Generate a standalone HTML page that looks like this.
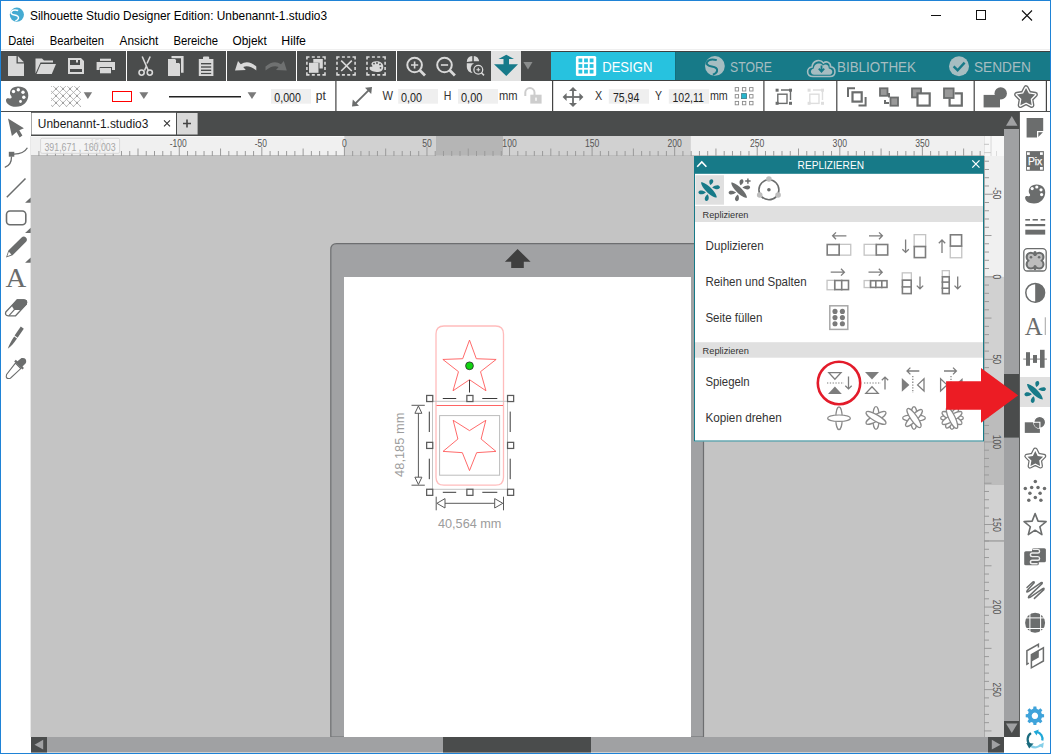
<!DOCTYPE html>
<html><head><meta charset="utf-8">
<style>
html,body{margin:0;padding:0;background:#fff;overflow:hidden;}
svg{display:block;}
text{font-family:"Liberation Sans",sans-serif;}
</style></head>
<body>
<svg width="1051" height="754" viewBox="0 0 1051 754" shape-rendering="geometricPrecision">
<!-- base -->
<rect x="0" y="0" width="1051" height="754" fill="#ffffff"/>

<!-- TITLE BAR -->
<g id="title">
  <circle cx="16.85" cy="14.65" r="7.1" fill="#45abd2"/>
  <path d="M18.2,10.5 C15.5,9.7 12.4,10 11.2,11.8 C10.3,13.3 11.8,14.6 14.6,15.1 C17.6,15.6 18.8,16.6 18.4,18.3 C18.1,19.6 16.9,20.4 15.4,20.9" fill="none" stroke="#fff" stroke-width="1.5"/>
  <text x="30" y="20" font-size="12.4" fill="#000" textLength="297" lengthAdjust="spacingAndGlyphs">Silhouette Studio Designer Edition: Unbenannt-1.studio3</text>
  <rect x="931" y="15" width="10" height="1" fill="#111"/>
  <rect x="976.5" y="10.5" width="9" height="9" fill="none" stroke="#111" stroke-width="1"/>
  <path d="M1022,10.5 L1032,20.5 M1032,10.5 L1022,20.5" stroke="#111" stroke-width="1.1"/>
</g>

<!-- MENU BAR -->
<g id="menu" font-size="12" fill="#000">
  <text x="8.2" y="44.7" textLength="26" lengthAdjust="spacingAndGlyphs">Datei</text>
  <text x="49.7" y="44.7" textLength="54.3" lengthAdjust="spacingAndGlyphs">Bearbeiten</text>
  <text x="119.5" y="44.7" textLength="38.9" lengthAdjust="spacingAndGlyphs">Ansicht</text>
  <text x="173.4" y="44.7" textLength="44.6" lengthAdjust="spacingAndGlyphs">Bereiche</text>
  <text x="232.5" y="44.7" textLength="34.2" lengthAdjust="spacingAndGlyphs">Objekt</text>
  <text x="281.3" y="44.7" textLength="24.7" lengthAdjust="spacingAndGlyphs">Hilfe</text>
  <rect x="0" y="49" width="1051" height="1" fill="#efefef"/>
</g>

<!-- TOOLBAR ROW 1 -->
<g id="tb1">
  <rect x="0" y="51" width="1051" height="30" fill="#4a4c4c"/>
  <rect x="126" y="51" width="1" height="30" fill="#ffffff"/>
  <rect x="226" y="51" width="1" height="30" fill="#ffffff"/>
  <rect x="296" y="51" width="1" height="30" fill="#ffffff"/>
  <rect x="396" y="51" width="1" height="30" fill="#ffffff"/>
  <rect x="491" y="51" width="30" height="30" fill="#e2e2e2"/>
  <rect x="551" y="52" width="124" height="28" fill="#27c2df"/>
  <rect x="675" y="52" width="376" height="28" fill="#177a88"/>
  <rect x="675" y="52" width="1" height="28" fill="#146f7c"/>
  <rect x="551" y="51" width="500" height="1" fill="#3e4040"/>
  <rect x="551" y="80" width="500" height="1" fill="#3e4040"/>
  <g fill="#d9d9d9">
    <!-- new doc -->
    <path d="M8,56 H16.5 V63.5 H24 V76 H8 Z"/>
    <path d="M17.8,56 L24,62.2 H17.8 Z"/>
    <!-- folder -->
    <path d="M35.5,73.5 V58.5 H42 L44,60.5 H53 V62.5 H40.5 Z"/>
    <path d="M36.5,74 L40.8,64 H56 L51.8,74 Z"/>
    <!-- save -->
    <path d="M68,58 H81 L84,61 V74 H68 Z M70,60 V65 H80 V60 H78 V62.5 H76 V60 Z M70,69 V72 H82 V69 Z" fill-rule="evenodd"/>
    <!-- print -->
    <rect x="100" y="58.7" width="11" height="2.2"/>
    <path d="M96.6,62 H115 V70 H112 V67 H99.6 V70 H96.6 Z"/>
    <rect x="100" y="68" width="11" height="5.3"/>
  </g>
  <!-- scissors -->
  <g stroke="#d9d9d9" fill="none" stroke-width="1.6">
    <path d="M142.2,56.5 L148.3,70.5 M150.2,56.5 L147,63.5 M144.5,70.5 L146.2,66.5"/>
    <circle cx="141.6" cy="72.6" r="2.6"/>
    <circle cx="149.8" cy="72.6" r="2.6"/>
  </g>
  <g fill="#d9d9d9">
    <!-- copy -->
    <path d="M171.5,56 H183.6 V72.8 H181 V58.3 H171.5 Z"/>
    <path d="M168,59 H175 L180,64 V76 H168 Z"/>
    <path d="M176,59.5 L179.5,63 H176 Z" fill="#4a4c4c"/>
    <!-- paste -->
    <path d="M198.8,59 H203 V57.5 Q203,56.6 204,56.6 H208.2 Q209.2,56.6 209.2,57.5 V59 H213.4 V76 H198.8 Z"/>
    <g fill="#4a4c4c"><rect x="201" y="63" width="10.2" height="1.4"/><rect x="201" y="66.3" width="10.2" height="1.4"/><rect x="201" y="69.6" width="10.2" height="1.4"/><rect x="201" y="72.9" width="10.2" height="1.2"/></g>
    <!-- undo -->
    <path d="M235,70.5 L238,61 L240.8,64.2 Q248,59.2 256.3,66.5 L256.3,70.5 Q249,64.5 243.2,67 L245.8,70 Z"/>
    <!-- redo -->
    <path d="M286.8,70.5 L283.8,61 L281,64.2 Q273.8,59.2 265.5,66.5 L265.5,70.5 Q272.8,64.5 278.6,67 L276,70 Z" fill="#6f7171"/>
  </g>
  <!-- dashed boxes -->
  <path d="M306.9,59.6 V57.0 H309.5 M322.4,57.0 H325.0 V59.6 M325.0,72.30000000000001 V74.9 H322.4 M309.5,74.9 H306.9 V72.30000000000001 M311.80,57.0 H314.80 M311.80,74.9 H314.80 M306.9,61.83 V64.83 M325.0,61.83 V64.83 M317.10,57.0 H320.10 M317.10,74.9 H320.10 M306.9,67.07 V70.07 M325.0,67.07 V70.07 M337.0,59.6 V57.0 H339.6 M352.5,57.0 H355.1 V59.6 M355.1,72.30000000000001 V74.9 H352.5 M339.6,74.9 H337.0 V72.30000000000001 M341.90,57.0 H344.90 M341.90,74.9 H344.90 M337.0,61.83 V64.83 M355.1,61.83 V64.83 M347.20,57.0 H350.20 M347.20,74.9 H350.20 M337.0,67.07 V70.07 M355.1,67.07 V70.07 M367.0,59.6 V57.0 H369.6 M382.5,57.0 H385.1 V59.6 M385.1,72.30000000000001 V74.9 H382.5 M369.6,74.9 H367.0 V72.30000000000001 M371.90,57.0 H374.90 M371.90,74.9 H374.90 M367.0,61.83 V64.83 M385.1,61.83 V64.83 M377.20,57.0 H380.20 M377.20,74.9 H380.20 M367.0,67.07 V70.07 M385.1,67.07 V70.07" fill="none" stroke="#d9d9d9" stroke-width="1.6"/>
  <g fill="#d9d9d9">
    <path d="M313.3,59 H322.8 V68.5 H319.5 V62.8 H313.3 Z"/>
    <rect x="309" y="62.8" width="9.5" height="10"/>
    <path d="M341.2,60.6 L351.8,71 M351.8,60.6 L341.2,71" stroke="#d9d9d9" stroke-width="1.6"/>
    <!-- palette small -->
    <g transform="translate(0,1.6)"><path d="M376,59.6 C381,59.4 383.4,62 383.3,65.3 C383.2,69 380.5,70.5 376.5,70.4 C372.7,70.3 369.8,69 369.5,66.5 C369.4,65.6 370.2,64.9 371.3,65.2 C372.5,65.5 372.9,64.2 371.8,63.3 C371,62.6 371.3,59.8 376,59.6 Z"/>
    <g fill="#4a4c4c"><circle cx="374" cy="62" r="0.9"/><circle cx="377" cy="61.4" r="0.9"/><circle cx="380" cy="62.8" r="0.9"/><circle cx="380.5" cy="66.2" r="0.9"/></g></g>
  </g>
  <!-- zoom -->
  <g fill="none" stroke="#d9d9d9" stroke-width="2">
    <circle cx="414.6" cy="65" r="7.3"/>
    <path d="M419.8,70.2 L425,75.4" stroke-width="2.8"/>
    <path d="M411,65 H418.2 M414.6,61.4 V68.6" stroke-width="1.6"/>
    <circle cx="444.5" cy="65" r="7.3"/>
    <path d="M449.7,70.2 L454.9,75.4" stroke-width="2.8"/>
    <path d="M440.9,65 H448.1" stroke-width="1.6"/>
  </g>
  <g fill="#d9d9d9">
    <path d="M466.8,62 A6.2,6.2 0 0 1 472.3,56 V61.2 Z M473.8,56 A6.2,6.2 0 0 1 479.2,61.2 H473.8 Z M466.8,63.3 H474 A6,6 0 0 0 472.6,73 A6,6 0 0 1 466.8,67 Z"/>
    <circle cx="478.3" cy="69.7" r="4.4" fill="none" stroke="#d9d9d9" stroke-width="1.3"/>
    <path d="M476.4,69.7 H480.2 M478.3,67.8 V71.6" stroke="#d9d9d9" stroke-width="1.1"/>
    <path d="M481.4,72.8 L484,75.4" stroke="#d9d9d9" stroke-width="1.6"/>
  </g>
  <!-- teal arrows -->
  <path d="M506.3,54.8 L514,59 H509 V64.3 H518 L506.3,76 L494,64.3 H503.5 V59 H498.5 Z" fill="#177a8a"/>
  <path d="M523.4,62 H532.5 L528,69.6 Z" fill="#8a8c8c"/>
  <!-- DESIGN -->
  <rect x="575.9" y="55.9" width="20.3" height="20.1" rx="1.5" fill="#ffffff"/>
  <g fill="#27c2df"><rect x="578.5" y="58.5" width="3.8" height="3.8"/><rect x="584.1" y="58.5" width="3.8" height="3.8"/><rect x="589.7" y="58.5" width="3.8" height="3.8"/><rect x="578.5" y="64.1" width="3.8" height="3.8"/><rect x="584.1" y="64.1" width="3.8" height="3.8"/><rect x="589.7" y="64.1" width="3.8" height="3.8"/><rect x="578.5" y="69.7" width="3.8" height="3.8"/><rect x="584.1" y="69.7" width="3.8" height="3.8"/><rect x="589.7" y="69.7" width="3.8" height="3.8"/></g>
  <text x="602.2" y="71.8" font-size="14.4" fill="#ffffff" textLength="50.2" lengthAdjust="spacingAndGlyphs">DESIGN</text>
  <!-- STORE -->
  <circle cx="714.9" cy="65.9" r="9.9" fill="#a6bdc1"/>
  <path transform="translate(714.9,65.9) scale(1.39) translate(-16.85,-14.65)" d="M18.2,10.5 C15.5,9.7 12.4,10 11.2,11.8 C10.3,13.3 11.8,14.6 14.6,15.1 C17.6,15.6 18.8,16.6 18.4,18.3 C18.1,19.6 16.9,20.4 15.4,20.9" fill="none" stroke="#177a88" stroke-width="1.45"/>
  <text x="730" y="71.8" font-size="14.4" fill="#a6bdc1" textLength="42" lengthAdjust="spacingAndGlyphs">STORE</text>
  <!-- BIBLIOTHEK -->
  <path d="M813,76.5 C806,76.5 806,67.5 812,67 C812.5,60.5 820,58.5 823.5,63 C826.5,60.5 831,62.5 830.5,66.8 C836.5,67.5 836.5,76.5 830,76.5 Z" fill="none" stroke="#a6bdc1" stroke-width="1.6"/>
  <path d="M814.2,74.8 C810,74.8 809.8,69 813.8,68.6 C814,63.2 820.2,61.8 823,65.4 C825.6,63.2 829,65 828.8,68.4 C833.5,68.8 833.5,74.8 828.8,74.8 Z" fill="#a6bdc1"/>
  <path d="M821.5,65.5 V71 M818.8,68.6 L821.5,71.6 L824.2,68.6" fill="none" stroke="#177a88" stroke-width="1.8"/>
  <text x="837" y="71.8" font-size="14.4" fill="#a6bdc1" textLength="79" lengthAdjust="spacingAndGlyphs">BIBLIOTHEK</text>
  <!-- SENDEN -->
  <circle cx="959" cy="66.2" r="10" fill="#a6bdc1"/>
  <path d="M953.6,66.4 L957.6,70.2 L964.6,62.6" fill="none" stroke="#177a88" stroke-width="2.4"/>
  <text x="974" y="71.8" font-size="14.4" fill="#a6bdc1" textLength="57" lengthAdjust="spacingAndGlyphs">SENDEN</text>
</g>

<!-- TOOLBAR ROW 2 -->
<g id="tb2">
  <rect x="0" y="81" width="1051" height="30" fill="#ffffff"/>
  <rect x="0" y="111" width="1051" height="1.5" fill="#4a4c4c"/>
  <!-- palette -->
  <path d="M17.5,86.5 C24.5,86.2 28.5,90.2 28.3,95.5 C28.1,101.5 23.5,106.8 16,106.8 C9.5,106.8 5.8,103.2 6,100 C6.2,98.3 7.6,97.8 9.2,98.4 C11.2,99.2 12.5,97.5 11,95.8 C9,93.5 9.5,86.8 17.5,86.5 Z" fill="#6b6d6d"/>
  <g fill="#ffffff"><circle cx="13.5" cy="91.5" r="1.7"/><circle cx="18.3" cy="89.8" r="1.7"/><circle cx="23" cy="92.3" r="1.7"/><circle cx="23.8" cy="97.3" r="1.7"/><circle cx="20.5" cy="101.5" r="1.4"/></g>
  <!-- crosshatch -->
  <clipPath id="chc"><rect x="51" y="86" width="30" height="21"/></clipPath>
  <g clip-path="url(#chc)">
    <path d="M11.10,86 L32.10,107 M18.10,86 L39.10,107 M25.10,86 L46.10,107 M32.10,86 L53.10,107 M39.10,86 L60.10,107 M46.10,86 L67.10,107 M53.10,86 L74.10,107 M60.10,86 L81.10,107 M67.10,86 L88.10,107 M74.10,86 L95.10,107 M81.10,86 L102.10,107 M88.10,86 L109.10,107 M95.10,86 L116.10,107 M102.10,86 L123.10,107 M16.90,86 L-4.10,107 M23.90,86 L2.90,107 M30.90,86 L9.90,107 M37.90,86 L16.90,107 M44.90,86 L23.90,107 M51.90,86 L30.90,107 M58.90,86 L37.90,107 M65.90,86 L44.90,107 M72.90,86 L51.90,107 M79.90,86 L58.90,107 M86.90,86 L65.90,107 M93.90,86 L72.90,107 M100.90,86 L79.90,107 M107.90,86 L86.90,107" stroke="#b0b0b0" stroke-width="0.9" fill="none"/>
    <g fill="#a0a0a0"><rect x="55.00" y="87.90" width="2" height="2"/><rect x="55.00" y="94.90" width="2" height="2"/><rect x="55.00" y="101.90" width="2" height="2"/><rect x="62.00" y="87.90" width="2" height="2"/><rect x="62.00" y="94.90" width="2" height="2"/><rect x="62.00" y="101.90" width="2" height="2"/><rect x="69.00" y="87.90" width="2" height="2"/><rect x="69.00" y="94.90" width="2" height="2"/><rect x="69.00" y="101.90" width="2" height="2"/><rect x="76.00" y="87.90" width="2" height="2"/><rect x="76.00" y="94.90" width="2" height="2"/><rect x="76.00" y="101.90" width="2" height="2"/></g>
  </g>
  <g fill="#6b6d6d">
    <path d="M83.7,92.2 H92.1 L87.9,99.1 Z" fill="#7a7a7a"/>
    <path d="M139.4,92.2 H148.3 L143.85,99.1 Z" fill="#7a7a7a"/>
    <path d="M247.6,92.2 H256.4 L252,99.1 Z" fill="#7a7a7a"/>
  </g>
  <rect x="112.5" y="91.5" width="19" height="10" fill="none" stroke="#ff0000" stroke-width="1"/>
  <rect x="169" y="96" width="72" height="1.5" fill="#222"/>
  <!-- inputs -->
  <g fill="#efefef">
    <rect x="271" y="89" width="40" height="14.7"/>
    <rect x="398.2" y="89" width="39.8" height="14.7"/>
    <rect x="458" y="89" width="40" height="14.7"/>
    <rect x="608.8" y="89.2" width="40.2" height="14.5"/>
    <rect x="668.8" y="89.2" width="40.2" height="14.5"/>
  </g>
  <g font-size="12.6" fill="#222">
    <text x="274.3" y="101.5" textLength="26.6" lengthAdjust="spacingAndGlyphs">0,000</text>
    <text x="401" y="101.8" textLength="21" lengthAdjust="spacingAndGlyphs">0,00</text>
    <text x="461" y="101.8" textLength="21.3" lengthAdjust="spacingAndGlyphs">0,00</text>
    <text x="613" y="101.7" textLength="26.3" lengthAdjust="spacingAndGlyphs">75,94</text>
    <text x="672.5" y="101.7" textLength="31.4" lengthAdjust="spacingAndGlyphs">102,11</text>
  </g>
  <g font-size="12.4" fill="#333">
    <text x="315.7" y="100" textLength="10.1" lengthAdjust="spacingAndGlyphs">pt</text>
    <text x="382.5" y="99.7" textLength="10.5" lengthAdjust="spacingAndGlyphs">W</text>
    <text x="443.7" y="99.7" textLength="7.6" lengthAdjust="spacingAndGlyphs">H</text>
    <text x="499" y="100" textLength="18.6" lengthAdjust="spacingAndGlyphs">mm</text>
    <text x="595.1" y="100" textLength="7.2" lengthAdjust="spacingAndGlyphs">X</text>
    <text x="655" y="100" textLength="7" lengthAdjust="spacingAndGlyphs">Y</text>
    <text x="709.9" y="100" textLength="17.9" lengthAdjust="spacingAndGlyphs">mm</text>
  </g>
  <!-- separators -->
  <g fill="#444">
    <rect x="335.3" y="81" width="1.2" height="30"/>
    <rect x="552" y="81" width="1.2" height="30"/>
    <rect x="763.3" y="81" width="1.2" height="30"/>
    <rect x="836.2" y="81" width="1.2" height="30"/>
    <rect x="973.6" y="81" width="1.2" height="30"/>
    <rect x="1045.8" y="81" width="1.2" height="30"/>
  </g>
  <!-- diag arrow -->
  <g fill="#6b6d6d">
    <path d="M355,103.8 L369.3,89.6" stroke="#6b6d6d" stroke-width="1.9"/>
    <path d="M372,87 L371.2,94 L365,87.8 Z"/>
    <path d="M352,106.5 L352.8,99.5 L359,105.7 Z"/>
  </g>
  <!-- lock -->
  <path d="M525.3,96 V92.6 A4.6,4.6 0 0 1 534.5,92.6 V95" fill="none" stroke="#cdcdcd" stroke-width="2"/>
  <rect x="530.3" y="94.7" width="11.3" height="8.9" fill="#cdcdcd"/>
  <rect x="535.3" y="97.6" width="1.4" height="3.2" fill="#fff"/>
  <!-- move -->
  <g fill="#6b6d6d">
    <rect x="566" y="96.1" width="14.6" height="1.8"/>
    <rect x="572.1" y="90" width="1.8" height="14"/>
    <path d="M573,87 L577,91 H569 Z M573,107 L577,103 H569 Z M562.6,97 L566.6,93 V101 Z M583.4,97 L579.4,93 V101 Z"/>
  </g>
  <!-- grid 3x3 -->
  <g fill="none" stroke="#8a8a8a" stroke-width="0.9">
    <rect x="735.2" y="87.6" width="3.4" height="3.4"/><rect x="742.4" y="87.6" width="3.4" height="3.4"/><rect x="749.6" y="87.6" width="3.4" height="3.4"/>
    <rect x="735.2" y="94.6" width="3.4" height="3.4"/><rect x="749.6" y="94.6" width="3.4" height="3.4"/>
    <rect x="735.2" y="101.4" width="3.4" height="3.4"/><rect x="742.4" y="101.4" width="3.4" height="3.4"/><rect x="749.6" y="101.4" width="3.4" height="3.4"/>
  </g>
  <rect x="741.6" y="93.6" width="5" height="5" fill="#27b5cc" stroke="#3c7c88" stroke-width="0.8"/>
  <!-- crop -->
  <g fill="none" stroke="#6b6d6d" stroke-width="1.4">
    <rect x="777.8" y="94.2" width="9.2" height="9.2"/>
    <path d="M781,90 H790.5 V100"/>
  </g>
  <g fill="#6b6d6d"><rect x="775.6" y="88.7" width="3" height="3"/><rect x="789" y="88.7" width="3" height="3"/><rect x="775.6" y="101.8" width="3" height="3"/><rect x="789" y="101.8" width="3" height="3"/></g>
  <g fill="none" stroke="#dedede" stroke-width="1.4">
    <rect x="809.8" y="94.2" width="9.2" height="9.2"/>
    <path d="M813,90 H822.5 V100"/>
  </g>
  <g fill="#dedede"><rect x="807.6" y="88.7" width="3" height="3"/><rect x="821" y="88.7" width="3" height="3"/><rect x="807.6" y="101.8" width="3" height="3"/><rect x="821" y="101.8" width="3" height="3"/></g>
  <!-- arrange -->
  <g fill="none" stroke="#6b6d6d" stroke-width="2">
    <path d="M848,97 V88.3 H855"/>
    <rect x="852.5" y="92.3" width="9.2" height="9.3" stroke-width="2.2"/>
    <path d="M865.6,97 V105.6 H858.5"/>
    <path d="M885,94 H889 V97.5 M885,100 V103 H889"/>
  </g>
  <g fill="#999" stroke="#6b6d6d" stroke-width="1.8">
    <rect x="880" y="88.3" width="7.5" height="7.5"/>
    <rect x="890.5" y="97.5" width="7.5" height="8.2"/>
    <rect x="912" y="88.4" width="9" height="9" />
    <rect x="944" y="88.4" width="9.6" height="9.6"/>
  </g>
  <g fill="none" stroke="#6b6d6d" stroke-width="2.2">
    <rect x="917.5" y="93.4" width="12.2" height="12.2" fill="#fff"/>
    <path d="M954.5,93.4 H961.8 V105.6 H949.6 V98.5"/>
  </g>
  <!-- weld -->
  <g fill="#6b6d6d">
    <rect x="983.6" y="94.9" width="16.4" height="12.5"/>
    <circle cx="1000.7" cy="93.4" r="6.2"/>
  </g>
  <!-- star outline -->
  <path d="M1026.05,87.90 L1028.93,93.54 L1035.18,94.53 L1030.71,99.01 L1031.69,105.27 L1026.05,102.40 L1020.41,105.27 L1021.39,99.01 L1016.92,94.53 L1023.17,93.54 Z" fill="#6b6d6d" stroke="#6b6d6d" stroke-width="5.4" stroke-linejoin="round"/>
  <path d="M1026.05,87.90 L1028.93,93.54 L1035.18,94.53 L1030.71,99.01 L1031.69,105.27 L1026.05,102.40 L1020.41,105.27 L1021.39,99.01 L1016.92,94.53 L1023.17,93.54 Z" fill="#fff" stroke="#fff" stroke-width="2.7" stroke-linejoin="round"/>
  <path d="M1026.05,87.90 L1028.93,93.54 L1035.18,94.53 L1030.71,99.01 L1031.69,105.27 L1026.05,102.40 L1020.41,105.27 L1021.39,99.01 L1016.92,94.53 L1023.17,93.54 Z" fill="#6b6d6d"/>
</g>

<!-- TAB BAR -->
<g id="tabs">
  <rect x="31" y="112" width="989" height="24" fill="#4a4c4c"/>
  <rect x="31.5" y="112.8" width="144.5" height="21.7" fill="#ffffff"/>
  <rect x="177" y="113" width="20.6" height="21.5" fill="#d9d9d9"/>
  <text x="37.8" y="127.7" font-size="12.4" fill="#1a1a1a" textLength="110.5" lengthAdjust="spacingAndGlyphs">Unbenannt-1.studio3</text>
  <path d="M164,120.4 L170,126.4 M170,120.4 L164,126.4" stroke="#333" stroke-width="1.1"/>
  <path d="M183,123.5 H191 M187,119.5 V127.5" stroke="#444" stroke-width="1.6"/>
</g>

<!-- LEFT TOOLBAR -->
<g id="left">
  <rect x="0" y="112" width="31" height="642" fill="#ffffff"/>
  <rect x="30" y="136" width="1" height="601" fill="#e8e8e8"/>
  <g fill="#6b6d6d">
    <path d="M8,118.4 L23.9,128.3 L19.3,130.2 L22.4,135.6 L19.6,137.4 L16.5,132 L11.9,135.9 Z"/>
    <rect x="8.8" y="151.8" width="5.5" height="4.9"/>
    <path d="M14,154.2 C20,154 25,152 27.4,147.8" fill="none" stroke="#6b6d6d" stroke-width="1.3"/>
    <path d="M11.5,156.5 C11.6,162 9,166 4.8,167.3" fill="none" stroke="#6b6d6d" stroke-width="1.3"/>
    <path d="M6.8,197.3 L25.5,178.5" stroke="#6b6d6d" stroke-width="1.5"/>
    <path d="M25.1,202.7 H30.7 V197.5 Z"/>
    <rect x="6.5" y="211" width="19.3" height="13.8" rx="3.5" fill="none" stroke="#6b6d6d" stroke-width="1.6"/>
    <path d="M25.1,233 H30.7 V227.7 Z"/>
    <path d="M6,257.6 L8.4,250.6 L21.6,237.6 Q23.8,235.5 25.9,237.6 Q28,239.8 25.8,242 L12.6,255.2 Z"/>
    <path d="M7.3,256.3 L8.8,251.8 L11.4,254.5 Z" fill="#ffffff"/>
    <path d="M25.1,262.7 H30.7 V257.5 Z"/>
    <text x="5.6" y="287.3" style="font-family:'Liberation Serif',serif" font-size="27.5" textLength="20.8" lengthAdjust="spacingAndGlyphs">A</text>
    <!-- eraser -->
    <path d="M17.2,299.9 H23.8 Q27.8,300.2 26.2,304.2 L15.6,315.8 H8.4 Q4.6,315.6 5.8,312 Z" fill="none" stroke="#6b6d6d" stroke-width="1.3" stroke-linejoin="round"/>
    <path d="M16.9,299.2 H23.8 Q28.4,299.4 26.8,304.3 L20.8,310 H14.2 L11.6,305.6 Z"/>
    <path d="M14.4,309.6 L9,315.6" stroke="#6b6d6d" stroke-width="1.2"/>
    <!-- knife -->
    <path d="M20.8,326.6 L23.8,328.8 L17.6,337.7 L14.6,335.5 Z"/>
    <path d="M14.2,336.5 L17,338.4 C14,343 10.5,346.8 7.8,348.7 C9,345 11.5,340.5 14.2,336.5 Z"/>
    <!-- eyedropper -->
    <path d="M21.5,358 Q26.5,357.2 26.2,362 Q26,363.5 24,365 L22.5,366.4 L24,368 L22.4,369.6 L14.2,361.4 L15.8,359.8 L17.4,361.3 Z"/>
    <path d="M15.4,363.2 L20.8,368.6 L10.4,378.2 Q7.8,379 6.8,378 Q5.8,377 6.6,374.4 Z" fill="none" stroke="#6b6d6d" stroke-width="1.1"/>
  </g>
</g>

<!-- CANVAS -->
<g id="canvas">
  <rect x="31" y="156" width="953" height="581" fill="#c4c4c4"/>
  <!-- horizontal ruler -->
  <rect x="31" y="136" width="953" height="20" fill="#f0f0f0"/>
  <rect x="31" y="136" width="313" height="1" fill="#fafafa"/>
  <rect x="344.4" y="136" width="346.4" height="20" fill="#d1d1d1"/>
  <rect x="436" y="136" width="67" height="20" fill="#b5b5b5"/>
  <rect x="31" y="155" width="953" height="1" fill="#bdbdbd"/>
  <g fill="#9a9a9a"><rect x="38.41" y="151" width="1" height="5"/><rect x="46.67" y="151" width="1" height="5"/><rect x="54.92" y="148.5" width="1" height="7.5"/><rect x="63.18" y="151" width="1" height="5"/><rect x="71.44" y="151" width="1" height="5"/><rect x="79.69" y="151" width="1" height="5"/><rect x="87.95" y="151" width="1" height="5"/><rect x="96.20" y="147" width="1" height="9"/><rect x="104.46" y="151" width="1" height="5"/><rect x="112.72" y="151" width="1" height="5"/><rect x="120.97" y="151" width="1" height="5"/><rect x="129.23" y="151" width="1" height="5"/><rect x="137.49" y="148.5" width="1" height="7.5"/><rect x="145.74" y="151" width="1" height="5"/><rect x="154.00" y="151" width="1" height="5"/><rect x="162.26" y="151" width="1" height="5"/><rect x="170.51" y="151" width="1" height="5"/><rect x="178.77" y="147" width="1" height="9"/><rect x="187.03" y="151" width="1" height="5"/><rect x="195.28" y="151" width="1" height="5"/><rect x="203.54" y="151" width="1" height="5"/><rect x="211.80" y="151" width="1" height="5"/><rect x="220.05" y="148.5" width="1" height="7.5"/><rect x="228.31" y="151" width="1" height="5"/><rect x="236.57" y="151" width="1" height="5"/><rect x="244.82" y="151" width="1" height="5"/><rect x="253.08" y="151" width="1" height="5"/><rect x="261.33" y="147" width="1" height="9"/><rect x="269.59" y="151" width="1" height="5"/><rect x="277.85" y="151" width="1" height="5"/><rect x="286.10" y="151" width="1" height="5"/><rect x="294.36" y="151" width="1" height="5"/><rect x="302.62" y="148.5" width="1" height="7.5"/><rect x="310.87" y="151" width="1" height="5"/><rect x="319.13" y="151" width="1" height="5"/><rect x="327.39" y="151" width="1" height="5"/><rect x="335.64" y="151" width="1" height="5"/><rect x="343.90" y="147" width="1" height="9"/><rect x="352.16" y="151" width="1" height="5"/><rect x="360.41" y="151" width="1" height="5"/><rect x="368.67" y="151" width="1" height="5"/><rect x="376.93" y="151" width="1" height="5"/><rect x="385.18" y="148.5" width="1" height="7.5"/><rect x="393.44" y="151" width="1" height="5"/><rect x="401.70" y="151" width="1" height="5"/><rect x="409.95" y="151" width="1" height="5"/><rect x="418.21" y="151" width="1" height="5"/><rect x="426.46" y="147" width="1" height="9"/><rect x="434.72" y="151" width="1" height="5"/><rect x="442.98" y="151" width="1" height="5"/><rect x="451.23" y="151" width="1" height="5"/><rect x="459.49" y="151" width="1" height="5"/><rect x="467.75" y="148.5" width="1" height="7.5"/><rect x="476.00" y="151" width="1" height="5"/><rect x="484.26" y="151" width="1" height="5"/><rect x="492.52" y="151" width="1" height="5"/><rect x="500.77" y="151" width="1" height="5"/><rect x="509.03" y="147" width="1" height="9"/><rect x="517.29" y="151" width="1" height="5"/><rect x="525.54" y="151" width="1" height="5"/><rect x="533.80" y="151" width="1" height="5"/><rect x="542.06" y="151" width="1" height="5"/><rect x="550.31" y="148.5" width="1" height="7.5"/><rect x="558.57" y="151" width="1" height="5"/><rect x="566.83" y="151" width="1" height="5"/><rect x="575.08" y="151" width="1" height="5"/><rect x="583.34" y="151" width="1" height="5"/><rect x="591.60" y="147" width="1" height="9"/><rect x="599.85" y="151" width="1" height="5"/><rect x="608.11" y="151" width="1" height="5"/><rect x="616.36" y="151" width="1" height="5"/><rect x="624.62" y="151" width="1" height="5"/><rect x="632.88" y="148.5" width="1" height="7.5"/><rect x="641.13" y="151" width="1" height="5"/><rect x="649.39" y="151" width="1" height="5"/><rect x="657.65" y="151" width="1" height="5"/><rect x="665.90" y="151" width="1" height="5"/><rect x="674.16" y="147" width="1" height="9"/><rect x="682.42" y="151" width="1" height="5"/><rect x="690.67" y="151" width="1" height="5"/><rect x="698.93" y="151" width="1" height="5"/><rect x="707.19" y="151" width="1" height="5"/><rect x="715.44" y="148.5" width="1" height="7.5"/><rect x="723.70" y="151" width="1" height="5"/><rect x="731.96" y="151" width="1" height="5"/><rect x="740.21" y="151" width="1" height="5"/><rect x="748.47" y="151" width="1" height="5"/><rect x="756.72" y="147" width="1" height="9"/><rect x="764.98" y="151" width="1" height="5"/><rect x="773.24" y="151" width="1" height="5"/><rect x="781.49" y="151" width="1" height="5"/><rect x="789.75" y="151" width="1" height="5"/><rect x="798.01" y="148.5" width="1" height="7.5"/><rect x="806.26" y="151" width="1" height="5"/><rect x="814.52" y="151" width="1" height="5"/><rect x="822.78" y="151" width="1" height="5"/><rect x="831.03" y="151" width="1" height="5"/><rect x="839.29" y="147" width="1" height="9"/><rect x="847.55" y="151" width="1" height="5"/><rect x="855.80" y="151" width="1" height="5"/><rect x="864.06" y="151" width="1" height="5"/><rect x="872.32" y="151" width="1" height="5"/><rect x="880.57" y="148.5" width="1" height="7.5"/><rect x="888.83" y="151" width="1" height="5"/><rect x="897.09" y="151" width="1" height="5"/><rect x="905.34" y="151" width="1" height="5"/><rect x="913.60" y="151" width="1" height="5"/><rect x="921.86" y="147" width="1" height="9"/><rect x="930.11" y="151" width="1" height="5"/><rect x="938.37" y="151" width="1" height="5"/><rect x="946.62" y="151" width="1" height="5"/><rect x="954.88" y="151" width="1" height="5"/><rect x="963.14" y="148.5" width="1" height="7.5"/><rect x="971.39" y="151" width="1" height="5"/><rect x="979.65" y="151" width="1" height="5"/></g>
  <g font-size="10.9" fill="#555"><text x="87.20" y="146.6" textLength="17.0" lengthAdjust="spacingAndGlyphs">-150</text><text x="169.77" y="146.6" textLength="17.0" lengthAdjust="spacingAndGlyphs">-100</text><text x="254.73" y="146.6" textLength="12.2" lengthAdjust="spacingAndGlyphs">-50</text><text x="342.00" y="146.6" textLength="4.8" lengthAdjust="spacingAndGlyphs">0</text><text x="422.16" y="146.6" textLength="9.6" lengthAdjust="spacingAndGlyphs">50</text><text x="502.33" y="146.6" textLength="14.4" lengthAdjust="spacingAndGlyphs">100</text><text x="584.89" y="146.6" textLength="14.4" lengthAdjust="spacingAndGlyphs">150</text><text x="667.46" y="146.6" textLength="14.4" lengthAdjust="spacingAndGlyphs">200</text><text x="750.02" y="146.6" textLength="14.4" lengthAdjust="spacingAndGlyphs">250</text><text x="832.59" y="146.6" textLength="14.4" lengthAdjust="spacingAndGlyphs">300</text><text x="915.15" y="146.6" textLength="14.4" lengthAdjust="spacingAndGlyphs">350</text></g>
  <!-- vertical ruler -->
  <rect x="984" y="136" width="20" height="601" fill="#f0f0f0"/>
  <rect x="984" y="136" width="20" height="20" fill="#f8f8f8"/><rect x="984" y="136" width="1" height="20" fill="#e4e4e4"/><rect x="990.4" y="136" width="1.3" height="20" fill="#e0e0e0"/><rect x="984" y="143.8" width="5" height="1" fill="#c4c4c4"/><rect x="984" y="152.1" width="7" height="1" fill="#cccccc"/><rect x="996" y="151" width="1" height="5" fill="#dcdcdc"/>
  <rect x="984" y="276.8" width="20" height="460.2" fill="#d1d1d1"/>
  <rect x="984" y="405" width="20" height="80" fill="#bcbcbc"/>
  <rect x="984" y="156" width="1" height="581" fill="#aaaaaa"/><rect x="984" y="540.3" width="20" height="1.3" fill="#9c9c9c"/>
  <g fill="#9a9a9a"><rect x="984" y="160.71" width="5" height="1"/><rect x="984" y="168.97" width="5" height="1"/><rect x="984" y="177.22" width="5" height="1"/><rect x="984" y="185.48" width="5" height="1"/><rect x="984" y="193.74" width="9" height="1"/><rect x="984" y="201.99" width="5" height="1"/><rect x="984" y="210.25" width="5" height="1"/><rect x="984" y="218.50" width="5" height="1"/><rect x="984" y="226.76" width="5" height="1"/><rect x="984" y="235.02" width="7.5" height="1"/><rect x="984" y="243.27" width="5" height="1"/><rect x="984" y="251.53" width="5" height="1"/><rect x="984" y="259.79" width="5" height="1"/><rect x="984" y="268.04" width="5" height="1"/><rect x="984" y="276.30" width="9" height="1"/><rect x="984" y="284.56" width="5" height="1"/><rect x="984" y="292.81" width="5" height="1"/><rect x="984" y="301.07" width="5" height="1"/><rect x="984" y="309.33" width="5" height="1"/><rect x="984" y="317.58" width="7.5" height="1"/><rect x="984" y="325.84" width="5" height="1"/><rect x="984" y="334.10" width="5" height="1"/><rect x="984" y="342.35" width="5" height="1"/><rect x="984" y="350.61" width="5" height="1"/><rect x="984" y="358.87" width="9" height="1"/><rect x="984" y="367.12" width="5" height="1"/><rect x="984" y="375.38" width="5" height="1"/><rect x="984" y="383.63" width="5" height="1"/><rect x="984" y="391.89" width="5" height="1"/><rect x="984" y="400.15" width="7.5" height="1"/><rect x="984" y="408.40" width="5" height="1"/><rect x="984" y="416.66" width="5" height="1"/><rect x="984" y="424.92" width="5" height="1"/><rect x="984" y="433.17" width="5" height="1"/><rect x="984" y="441.43" width="9" height="1"/><rect x="984" y="449.69" width="5" height="1"/><rect x="984" y="457.94" width="5" height="1"/><rect x="984" y="466.20" width="5" height="1"/><rect x="984" y="474.46" width="5" height="1"/><rect x="984" y="482.71" width="7.5" height="1"/><rect x="984" y="490.97" width="5" height="1"/><rect x="984" y="499.23" width="5" height="1"/><rect x="984" y="507.48" width="5" height="1"/><rect x="984" y="515.74" width="5" height="1"/><rect x="984" y="524.00" width="9" height="1"/><rect x="984" y="532.25" width="5" height="1"/><rect x="984" y="540.51" width="5" height="1"/><rect x="984" y="548.76" width="5" height="1"/><rect x="984" y="557.02" width="5" height="1"/><rect x="984" y="565.28" width="7.5" height="1"/><rect x="984" y="573.53" width="5" height="1"/><rect x="984" y="581.79" width="5" height="1"/><rect x="984" y="590.05" width="5" height="1"/><rect x="984" y="598.30" width="5" height="1"/><rect x="984" y="606.56" width="9" height="1"/><rect x="984" y="614.82" width="5" height="1"/><rect x="984" y="623.07" width="5" height="1"/><rect x="984" y="631.33" width="5" height="1"/><rect x="984" y="639.59" width="5" height="1"/><rect x="984" y="647.84" width="7.5" height="1"/><rect x="984" y="656.10" width="5" height="1"/><rect x="984" y="664.36" width="5" height="1"/><rect x="984" y="672.61" width="5" height="1"/><rect x="984" y="680.87" width="5" height="1"/><rect x="984" y="689.12" width="9" height="1"/><rect x="984" y="697.38" width="5" height="1"/><rect x="984" y="705.64" width="5" height="1"/><rect x="984" y="713.89" width="5" height="1"/><rect x="984" y="722.15" width="5" height="1"/><rect x="984" y="730.41" width="7.5" height="1"/></g>
  <g font-size="10.9" fill="#555"><text transform="translate(993.2,187.14) rotate(90)" x="0" y="0" textLength="12.2" lengthAdjust="spacingAndGlyphs">-50</text><text transform="translate(993.2,274.40) rotate(90)" x="0" y="0" textLength="4.8" lengthAdjust="spacingAndGlyphs">0</text><text transform="translate(993.2,354.56) rotate(90)" x="0" y="0" textLength="9.6" lengthAdjust="spacingAndGlyphs">50</text><text transform="translate(993.2,434.73) rotate(90)" x="0" y="0" textLength="14.4" lengthAdjust="spacingAndGlyphs">100</text><text transform="translate(993.2,517.29) rotate(90)" x="0" y="0" textLength="14.4" lengthAdjust="spacingAndGlyphs">150</text><text transform="translate(993.2,599.86) rotate(90)" x="0" y="0" textLength="14.4" lengthAdjust="spacingAndGlyphs">200</text><text transform="translate(993.2,682.42) rotate(90)" x="0" y="0" textLength="14.4" lengthAdjust="spacingAndGlyphs">250</text></g>
  <!-- mat -->
  <path d="M330.8,737 V249.5 Q330.8,243.6 336.7,243.6 H703.5 V737 Z" fill="#a1a2a4" stroke="#6d6e70" stroke-width="1.2"/>
  <rect x="344" y="277" width="347" height="460" fill="#ffffff"/>
  <path d="M517.6,249 L530.6,261.8 H523.8 V268 H511.2 V261.8 H504.9 Z" fill="#3f3f3f"/>
  <!-- scrollbars -->
  <rect x="31" y="737" width="973" height="15.5" fill="#a0a1a3"/>
  <rect x="31" y="737" width="16" height="15.5" fill="#4a4c4c"/>
  <path d="M34.5,744.7 L43.2,739.8 V749.6 Z" fill="#a0a1a3"/>
  <rect x="988" y="737" width="16" height="15.5" fill="#4a4c4c"/>
  <path d="M1000.5,744.7 L991.8,739.8 V749.6 Z" fill="#a0a1a3"/>
  <rect x="443" y="737" width="148" height="15.5" fill="#4a4c4c"/>
  <rect x="1004" y="112" width="16" height="625" fill="#a0a1a3"/>
  <rect x="1004" y="112" width="16" height="17" fill="#4a4c4c"/>
  <path d="M1011.8,116 L1017.5,125.7 H1006 Z" fill="#a0a1a3"/>
  <rect x="1004" y="721" width="16" height="16" fill="#4a4c4c"/>
  <path d="M1011.8,733 L1017.5,723.4 H1006 Z" fill="#a0a1a3"/>
  <rect x="1004" y="374" width="16" height="63.6" fill="#4a4c4c"/>
  <rect x="1004" y="737" width="16" height="16" fill="#ffffff"/>
</g>


<g id="objects">
  <!-- coordinate box -->
  <rect x="40.6" y="138.3" width="79" height="15" rx="1.5" fill="#f4f4f4" fill-opacity="0.85" stroke="#d8d8d8" stroke-width="1"/>
  <text x="44.4" y="150.7" font-size="10.3" fill="#a8a8a8" textLength="71.3" lengthAdjust="spacingAndGlyphs">391,671 , 160,003</text>
  <!-- red shapes -->
  <g fill="none" stroke="#ff5a5a" stroke-width="0.9">
    <path d="M436,477.2 V334 Q436,326 444,326 H495.5 Q503.5,326 503.5,334 V477.2 Q503.5,485.2 495.5,485.2 H444 Q436,485.2 436,477.2 Z" stroke="#ffbcbc" stroke-width="1.3"/>
    <path d="M436.5,405.5 H503" stroke="#ff6464" stroke-width="1.2"/>
    <path d="M469.50,340.10 L476.32,358.72 L496.13,359.45 L480.53,371.68 L485.96,390.75 L469.50,379.70 L453.04,390.75 L458.47,371.68 L442.87,359.45 L462.68,358.72 Z"/>
    <path d="M469.50,470.60 L462.33,452.67 L443.06,451.39 L457.90,439.03 L453.16,420.31 L469.50,430.60 L485.84,420.31 L481.10,439.03 L495.94,451.39 L476.67,452.67 Z"/>
  </g>
  <rect x="439.6" y="415.6" width="60" height="59.6" fill="none" stroke="#bcbcbc" stroke-width="1"/>
  <!-- selection -->
  <g fill="none" stroke="#c4c4c4" stroke-width="1">
    <path d="M432.5,398.5 V492.3 M507.5,398.5 V492.3 M429.3,401.3 H510.2 M429.3,489.3 H510.2"/>
  </g>
  <g fill="none" stroke="#3a3a3a" stroke-width="1">
    <path d="M442.8,398.5 H456.2 M482.3,398.5 H497.3 M442.8,492.3 H456.2 M482.3,492.3 H497.3"/>
    <path d="M429.3,411.6 V432 M429.3,458.7 V479.2 M510.2,411.6 V432 M510.2,458.7 V479.2"/>
    <path d="M469.5,380 V392.5"/>
  </g>
  <rect x="426.65" y="395.45" width="6.1" height="6.1" fill="#fff" stroke="#5c5c5c" stroke-width="1.25"/><rect x="466.85" y="395.45" width="6.1" height="6.1" fill="#fff" stroke="#5c5c5c" stroke-width="1.25"/><rect x="507.55" y="395.45" width="6.1" height="6.1" fill="#fff" stroke="#5c5c5c" stroke-width="1.25"/><rect x="426.65" y="442.35" width="6.1" height="6.1" fill="#fff" stroke="#5c5c5c" stroke-width="1.25"/><rect x="507.55" y="442.35" width="6.1" height="6.1" fill="#fff" stroke="#5c5c5c" stroke-width="1.25"/><rect x="426.65" y="489.25" width="6.1" height="6.1" fill="#fff" stroke="#5c5c5c" stroke-width="1.25"/><rect x="466.85" y="489.25" width="6.1" height="6.1" fill="#fff" stroke="#5c5c5c" stroke-width="1.25"/><rect x="507.55" y="489.25" width="6.1" height="6.1" fill="#fff" stroke="#5c5c5c" stroke-width="1.25"/>
  <circle cx="469.5" cy="365.8" r="3.9" fill="#11d411" stroke="#2a2a2a" stroke-width="0.8"/>
  <!-- dimensions -->
  <g fill="none" stroke="#5a5a5a" stroke-width="1">
    <path d="M418.4,413.3 V477.2 M411.5,405.3 H424.8 M411.5,485.2 H424.8"/>
    <path d="M418.4,406 L421.9,413.3 H414.9 Z M418.4,484.5 L421.9,477.2 H414.9 Z"/>
    <path d="M445,503.3 H494.7 M436.2,496.7 V510.3 M503.5,496.7 V510.3"/>
    <path d="M436.9,503.3 L445,498.6 V508 Z M502.8,503.3 L494.7,498.6 V508 Z"/>
  </g>
  <text x="438" y="528" font-size="12.7" fill="#9c9c9c" textLength="63.4" lengthAdjust="spacingAndGlyphs">40,564 mm</text>
  <text transform="translate(403.5,476.9) rotate(-90)" x="0" y="0" font-size="12.7" fill="#9c9c9c" textLength="64.3" lengthAdjust="spacingAndGlyphs">48,185 mm</text>
</g>

<g id="dialog">
  <rect x="694" y="156" width="290" height="285.5" fill="#ffffff"/>
  <rect x="694" y="156" width="290" height="17.6" fill="#177a88"/>
  <path d="M697.2,166.8 L701.8,162 L706.4,166.8" fill="none" stroke="#fff" stroke-width="1.6"/>
  <text x="797.6" y="168.6" font-size="11.8" fill="#ffffff" textLength="66.4" lengthAdjust="spacingAndGlyphs">REPLIZIEREN</text>
  <path d="M972.3,160.4 L979.5,167.6 M979.5,160.4 L972.3,167.6" stroke="#fff" stroke-width="1.3"/>
  <rect x="694.5" y="173" width="289" height="268" fill="none" stroke="#177a88" stroke-width="1"/>
  <rect x="695.4" y="175.2" width="28.6" height="29.5" fill="#e0e0e0"/>
  <!--REP2--><g><path d="M701.04,182.20 C701.14,187.61 711.36,197.61 716.76,197.60 C716.66,192.19 706.44,182.19 701.04,182.20 Z" fill="#177a88"/><path d="M710.30,185.00 C712.57,183.89 713.75,181.60 713.17,180.56 C712.60,179.06 711.39,178.72 710.13,179.72 C709.10,180.30 708.93,182.87 710.30,185.00 Z" fill="#177a88"/><path d="M712.20,187.40 C714.47,189.23 717.82,189.66 718.90,188.79 C720.35,187.81 720.32,186.55 718.82,185.65 C717.68,184.84 714.37,185.45 712.20,187.40 Z" fill="#177a88"/><path d="M707.70,194.30 C705.44,195.78 704.29,198.50 704.90,199.63 C705.53,201.18 706.76,201.45 707.98,200.31 C709.01,199.55 709.12,196.60 707.70,194.30 Z" fill="#177a88"/><path d="M705.90,192.40 C703.77,190.51 700.57,189.99 699.51,190.83 C698.06,191.77 698.06,193.03 699.51,193.97 C700.57,194.81 703.77,194.29 705.90,192.40 Z" fill="#177a88"/></g><!--/REP2-->
  <g fill="#6b6d6d"><!--REP3--><path d="M731.24,182.40 C731.34,187.81 741.56,197.81 746.96,197.80 C746.86,192.39 736.64,182.39 731.24,182.40 Z" fill="#6b6d6d"/><path d="M740.50,185.20 C742.77,184.09 743.95,181.80 743.37,180.76 C742.80,179.26 741.59,178.92 740.33,179.92 C739.30,180.50 739.13,183.07 740.50,185.20 Z" fill="#6b6d6d"/><path d="M742.40,187.60 C744.67,189.43 748.02,189.86 749.10,188.99 C750.55,188.01 750.52,186.75 749.02,185.85 C747.88,185.04 744.57,185.65 742.40,187.60 Z" fill="#6b6d6d"/><path d="M737.90,194.50 C735.64,195.98 734.49,198.70 735.10,199.83 C735.73,201.38 736.96,201.65 738.18,200.51 C739.21,199.75 739.32,196.80 737.90,194.50 Z" fill="#6b6d6d"/><path d="M736.10,192.60 C733.97,190.71 730.77,190.19 729.71,191.03 C728.26,191.97 728.26,193.23 729.71,194.17 C730.77,195.01 733.97,194.49 736.10,192.60 Z" fill="#6b6d6d"/><!--/REP3-->
    <path d="M745.2,181.1 H750.6 M747.9,178.4 V183.8" stroke="#6b6d6d" stroke-width="1.5"/>
    <circle cx="768.9" cy="189.8" r="10" fill="none" stroke="#6b6d6d" stroke-width="1.6"/>
    <circle cx="768.9" cy="189.8" r="1.8"/>
    <g fill="#bdbdbd"><circle cx="768.9" cy="179" r="2.8"/><circle cx="759.7" cy="195" r="2.8"/><circle cx="778.1" cy="195" r="2.8"/></g>
  </g>
  <rect x="695" y="206" width="288" height="16" fill="#e0e0e0"/>
  <text x="702.6" y="217.6" font-size="9.8" fill="#333" textLength="45.8" lengthAdjust="spacingAndGlyphs">Replizieren</text>
  <rect x="695" y="342.2" width="288" height="15.5" fill="#e0e0e0"/>
  <text x="702.6" y="353.8" font-size="9.8" fill="#333" textLength="46.2" lengthAdjust="spacingAndGlyphs">Replizieren</text>
  <g font-size="12.6" fill="#333">
    <text x="705.6" y="249.9" textLength="58.1" lengthAdjust="spacingAndGlyphs">Duplizieren</text>
    <text x="705.4" y="285.8" textLength="101.2" lengthAdjust="spacingAndGlyphs">Reihen und Spalten</text>
    <text x="705.4" y="321.9" textLength="57" lengthAdjust="spacingAndGlyphs">Seite füllen</text>
    <text x="705.4" y="385.7" textLength="44.3" lengthAdjust="spacingAndGlyphs">Spiegeln</text>
    <text x="705.4" y="421.5" textLength="76.3" lengthAdjust="spacingAndGlyphs">Kopien drehen</text>
  </g>
  <path d="M832.4,235.8 H846.4 M836,232.4 L832.6,235.8 L836,239.20000000000002" fill="none" stroke="#7d7d7d" stroke-width="1.3"/>
  <path d="M869,235.8 H882.6 M879,232.4 L882.4,235.8 L879,239.20000000000002" fill="none" stroke="#7d7d7d" stroke-width="1.3"/>
  <path d="M905.6,239.4 V252.6 M902.4,249.2 L905.6,252.4 L908.8000000000001,249.2" fill="none" stroke="#7d7d7d" stroke-width="1.3"/>
  <path d="M942,239.8 V253 M938.8,243.20000000000002 L942,240.0 L945.2,243.20000000000002" fill="none" stroke="#7d7d7d" stroke-width="1.3"/>
  <path d="M830.7,272.2 H844.6 M841,268.8 L844.4,272.2 L841,275.59999999999997" fill="none" stroke="#7d7d7d" stroke-width="1.3"/>
  <path d="M868.5,272.2 H882.4 M878.8,268.8 L882.1999999999999,272.2 L878.8,275.59999999999997" fill="none" stroke="#7d7d7d" stroke-width="1.3"/>
  <path d="M920,276.5 V289.0 M916.8,285.59999999999997 L920,288.79999999999995 L923.2,285.59999999999997" fill="none" stroke="#7d7d7d" stroke-width="1.3"/>
  <path d="M957.7,276.5 V289.0 M954.5,285.59999999999997 L957.7,288.79999999999995 L960.9000000000001,285.59999999999997" fill="none" stroke="#7d7d7d" stroke-width="1.3"/>
  <!--BOXES--><rect x="839.15" y="244.35" width="11.60" height="10.80" fill="none" stroke="#c4c4c4" stroke-width="1.3"/><rect x="827.20" y="244.50" width="12.00" height="10.50" fill="none" stroke="#7d7d7d" stroke-width="1.6"/><rect x="864.15" y="244.35" width="12.20" height="10.80" fill="none" stroke="#c4c4c4" stroke-width="1.3"/><rect x="876.30" y="244.50" width="11.40" height="10.50" fill="none" stroke="#7d7d7d" stroke-width="1.6"/><rect x="914.15" y="234.65" width="11.50" height="11.90" fill="none" stroke="#c4c4c4" stroke-width="1.3"/><rect x="914.30" y="246.50" width="11.20" height="11.10" fill="none" stroke="#7d7d7d" stroke-width="1.6"/><rect x="950.25" y="246.05" width="11.50" height="11.70" fill="none" stroke="#c4c4c4" stroke-width="1.3"/><rect x="950.40" y="234.80" width="11.20" height="11.30" fill="none" stroke="#7d7d7d" stroke-width="1.6"/><rect x="827.05" y="280.35" width="7.50" height="9.40" fill="none" stroke="#c4c4c4" stroke-width="1.3"/><rect x="834.80" y="280.50" width="13.70" height="9.10" fill="none" stroke="#7d7d7d" stroke-width="1.6"/><path d="M841.70,279.7 V290.4" stroke="#7d7d7d" stroke-width="1.6"/><rect x="864.15" y="280.55" width="6.20" height="7.00" fill="none" stroke="#c4c4c4" stroke-width="1.3"/><rect x="870.60" y="280.70" width="16.40" height="6.70" fill="none" stroke="#7d7d7d" stroke-width="1.6"/><path d="M875.80,279.9 V288.2" stroke="#7d7d7d" stroke-width="1.6"/><path d="M881.80,279.9 V288.2" stroke="#7d7d7d" stroke-width="1.6"/><rect x="902.25" y="272.85" width="9.10" height="7.10" fill="none" stroke="#c4c4c4" stroke-width="1.3"/><rect x="902.40" y="280.20" width="8.80" height="13.40" fill="none" stroke="#7d7d7d" stroke-width="1.6"/><path d="M901.6,286.90 H912" stroke="#7d7d7d" stroke-width="1.6"/><rect x="942.25" y="270.65" width="7.10" height="5.90" fill="none" stroke="#c4c4c4" stroke-width="1.3"/><rect x="942.40" y="276.80" width="6.80" height="16.80" fill="none" stroke="#7d7d7d" stroke-width="1.6"/><path d="M941.6,282.10 H950" stroke="#7d7d7d" stroke-width="1.6"/><path d="M941.6,288.20 H950" stroke="#7d7d7d" stroke-width="1.6"/><!--/BOXES--><!--FLOWERS--><ellipse cx="839" cy="418.2" rx="11.4" ry="3.2" transform="rotate(90.0 839 418.2)" fill="#fff" stroke="#8a8a8a" stroke-width="1.2"/><ellipse cx="839" cy="418.2" rx="11.4" ry="3.2" transform="rotate(0.0 839 418.2)" fill="#fff" stroke="#8a8a8a" stroke-width="1.2"/><ellipse cx="876" cy="417.9" rx="11.4" ry="3.2" transform="rotate(90.0 876 417.9)" fill="#fff" stroke="#8a8a8a" stroke-width="1.2"/><ellipse cx="876" cy="417.9" rx="11.4" ry="3.2" transform="rotate(150.0 876 417.9)" fill="#fff" stroke="#8a8a8a" stroke-width="1.2"/><ellipse cx="876" cy="417.9" rx="11.4" ry="3.2" transform="rotate(30.0 876 417.9)" fill="#fff" stroke="#8a8a8a" stroke-width="1.2"/><ellipse cx="914" cy="418" rx="11.4" ry="3.2" transform="rotate(0.0 914 418)" fill="#fff" stroke="#8a8a8a" stroke-width="1.2"/><ellipse cx="914" cy="418" rx="11.4" ry="3.2" transform="rotate(90.0 914 418)" fill="#fff" stroke="#8a8a8a" stroke-width="1.2"/><ellipse cx="914" cy="418" rx="11.4" ry="3.2" transform="rotate(135.0 914 418)" fill="#fff" stroke="#8a8a8a" stroke-width="1.2"/><ellipse cx="914" cy="418" rx="11.4" ry="3.2" transform="rotate(55.0 914 418)" fill="#fff" stroke="#8a8a8a" stroke-width="1.2"/><ellipse cx="952" cy="418" rx="11.4" ry="3.2" transform="rotate(0.0 952 418)" fill="#fff" stroke="#8a8a8a" stroke-width="1.2"/><ellipse cx="952" cy="418" rx="11.4" ry="3.2" transform="rotate(30.0 952 418)" fill="#fff" stroke="#8a8a8a" stroke-width="1.2"/><ellipse cx="952" cy="418" rx="11.4" ry="3.2" transform="rotate(90.0 952 418)" fill="#fff" stroke="#8a8a8a" stroke-width="1.2"/><ellipse cx="952" cy="418" rx="11.4" ry="3.2" transform="rotate(120.0 952 418)" fill="#fff" stroke="#8a8a8a" stroke-width="1.2"/><ellipse cx="952" cy="418" rx="11.4" ry="3.2" transform="rotate(150.0 952 418)" fill="#fff" stroke="#8a8a8a" stroke-width="1.2"/><ellipse cx="952" cy="418" rx="11.4" ry="3.2" transform="rotate(65.0 952 418)" fill="#fff" stroke="#8a8a8a" stroke-width="1.2"/><!--/FLOWERS-->
  <rect x="829.8" y="305.8" width="18" height="23.6" fill="none" stroke="#a8a8a8" stroke-width="1.5"/>
  <circle cx="835" cy="311.4" r="2.55" fill="#7a7a7a"/>
  <circle cx="835" cy="317.6" r="2.55" fill="#7a7a7a"/>
  <circle cx="835" cy="323.8" r="2.55" fill="#7a7a7a"/>
  <circle cx="842.4" cy="311.4" r="2.55" fill="#7a7a7a"/>
  <circle cx="842.4" cy="317.6" r="2.55" fill="#7a7a7a"/>
  <circle cx="842.4" cy="323.8" r="2.55" fill="#7a7a7a"/>
  <path d="M828.8,372.6 H841 L834.9,379.2 Z" fill="none" stroke="#7d7d7d" stroke-width="1.3"/>
  <path d="M827,383 H844" stroke="#7d7d7d" stroke-width="1.2" stroke-dasharray="1.3 1.5"/>
  <path d="M828,394 H841.8 L834.9,386.4 Z" fill="#7d7d7d"/>
  <path d="M848.5,376.5 V389.1 M845.3,385.7 L848.5,388.9 L851.7,385.7" fill="none" stroke="#7d7d7d" stroke-width="1.3"/>
  <path d="M865,372 H879 L872,379.6 Z" fill="#7d7d7d"/>
  <path d="M864,383 H881" stroke="#7d7d7d" stroke-width="1.2" stroke-dasharray="1.3 1.5"/>
  <path d="M865.8,393.4 H878.2 L872,386.8 Z" fill="none" stroke="#7d7d7d" stroke-width="1.3"/>
  <path d="M885,376.9 V389.5 M881.8,380.3 L885,377.1 L888.2,380.3" fill="none" stroke="#7d7d7d" stroke-width="1.3"/>
  <path d="M906.8,371 H919.3 M910.4,367.6 L907.0,371 L910.4,374.4" fill="none" stroke="#7d7d7d" stroke-width="1.3"/>
  <path d="M901.8,378 V391.8 L909.4,384.9 Z" fill="#7d7d7d"/>
  <path d="M912.8,376 V393" stroke="#7d7d7d" stroke-width="1.2" stroke-dasharray="1.3 1.5"/>
  <path d="M924,378.8 V391 L917.6,384.9 Z" fill="none" stroke="#7d7d7d" stroke-width="1.3"/>
  <path d="M944,371 H956.6 M953,367.6 L956.4,371 L953,374.4" fill="none" stroke="#7d7d7d" stroke-width="1.3"/>
  <path d="M940.6,378.8 V391 L947,384.9 Z" fill="none" stroke="#7d7d7d" stroke-width="1.3"/>
  <path d="M951,376 V393" stroke="#7d7d7d" stroke-width="1.2" stroke-dasharray="1.3 1.5"/>
  <path d="M962.6,378 V391.8 L955,384.9 Z" fill="#7d7d7d"/>
  
  
  
  
</g>
<!-- RIGHT PANEL -->
<g id="right">
  <rect x="1020" y="112" width="31" height="642" fill="#ffffff"/>
  <rect x="1019" y="112" width="1" height="625" fill="#5d5f5f"/>
  <rect x="1020" y="377" width="30" height="30" fill="#e0e0e0"/>
  <g fill="#6b6d6d">
    <!-- page -->
    <path d="M1026.6,118.1 H1043.2 V130.9 H1037 V137.6 H1026.6 Z"/>
    <path d="M1038.3,132.3 H1042.9 L1038.3,136.9 Z"/>
    <!-- pix -->
    <rect x="1026.1" y="151.1" width="17.8" height="19.7"/>
    <g fill="#fff"><rect x="1027" y="152.3" width="2.8" height="2.6"/><rect x="1040" y="152.3" width="2.8" height="2.6"/><rect x="1027" y="167" width="2.8" height="2.7"/><rect x="1040" y="167" width="2.8" height="2.7"/></g>
    <text x="1027.9" y="165.1" font-size="11.6" fill="#fff" stroke="#fff" stroke-width="0.25" textLength="14.4" lengthAdjust="spacingAndGlyphs">Pix</text>
    <!-- palette -->
    <path d="M1036.2,184.4 C1042.5,184.2 1045.4,188 1045.2,192.6 C1045,198.6 1040.8,203.6 1034,203.6 C1028.2,203.6 1025,200.6 1025.1,197.6 C1025.2,196 1026.5,195.6 1028,196.2 C1029.8,196.9 1030.9,195.3 1029.6,193.8 C1027.8,191.6 1028.6,184.7 1036.2,184.4 Z"/>
    <g fill="#fff"><circle cx="1032.2" cy="188.6" r="1.6"/><circle cx="1036.8" cy="187" r="1.6"/><circle cx="1041" cy="189.8" r="1.6"/><circle cx="1041.6" cy="194.6" r="1.6"/></g>
    <!-- lines -->
    <rect x="1025.3" y="219" width="4.7" height="1.6"/><rect x="1032.6" y="219" width="5.3" height="1.6"/><rect x="1040.6" y="219" width="4.6" height="1.6"/>
    <rect x="1025.3" y="224" width="19.9" height="2.2"/>
    <rect x="1025.3" y="229.7" width="19.9" height="4.9"/>
    <!-- rounded square flower -->
    <rect x="1023.8" y="248.6" width="22.4" height="22.4" rx="3.5" fill="none" stroke="#6b6d6d" stroke-width="1.3"/>
    <circle cx="1035" cy="252.6" r="1.6"/><circle cx="1035" cy="268.6" r="1.6"/>
    <circle cx="1030.9" cy="257" r="4.3" fill="#6b6d6d" stroke="#6b6d6d" stroke-width="2"/><circle cx="1039.2" cy="257" r="4.3" fill="#6b6d6d" stroke="#6b6d6d" stroke-width="2"/><circle cx="1030.9" cy="264.2" r="4.3" fill="#6b6d6d" stroke="#6b6d6d" stroke-width="2"/><circle cx="1039.2" cy="264.2" r="4.3" fill="#6b6d6d" stroke="#6b6d6d" stroke-width="2"/><circle cx="1030.9" cy="257" r="3.2" fill="#bdbdbd"/><circle cx="1039.2" cy="257" r="3.2" fill="#bdbdbd"/><circle cx="1030.9" cy="264.2" r="3.2" fill="#bdbdbd"/><circle cx="1039.2" cy="264.2" r="3.2" fill="#bdbdbd"/>
    <rect x="1030.9" y="256" width="8.3" height="9.2" fill="#bdbdbd"/>
    <rect x="1029.5" y="257" width="11" height="7.2" fill="#bdbdbd"/>
    <circle cx="1031" cy="257.2" r="1.3"/><circle cx="1039.1" cy="257.2" r="1.3"/>
    <!-- half circle -->
    <circle cx="1035.2" cy="292.8" r="9.4" fill="none" stroke="#6b6d6d" stroke-width="1.5"/>
    <path d="M1035.2,283.4 A9.4,9.4 0 0 1 1035.2,302.2 Z"/>
    <!-- A| -->
    <text x="1024.8" y="335" style="font-family:'Liberation Serif',serif" font-size="25" textLength="17.8" lengthAdjust="spacingAndGlyphs">A</text>
    <rect x="1044.8" y="317.3" width="0.9" height="17.7" fill="#999"/>
    <!-- barbell -->
    <rect x="1023.2" y="358.5" width="23.8" height="1.2" fill="#999"/>
    <rect x="1026" y="352.2" width="4" height="13.6"/>
    <rect x="1033" y="355" width="4" height="7.9"/>
    <rect x="1040" y="349.8" width="4.6" height="18"/>
    <!-- shapes -->
    <rect x="1024.8" y="422.3" width="15.1" height="10.6"/>
    <circle cx="1039.7" cy="422.3" r="5.9" stroke="#fff" stroke-width="1.3"/>
    <path d="M1033.8,422.9 H1039.2 V428.2 A5.9,5.9 0 0 1 1033.8,422.9 Z"/>
    <path d="M1033.6,422.2 H1039.9 V428.6" fill="none" stroke="#fff" stroke-width="1.1"/>
    <!-- star filled with outline -->
    <path d="M1035.30,449.90 L1038.00,455.18 L1043.86,456.12 L1039.67,460.32 L1040.59,466.18 L1035.30,463.50 L1030.01,466.18 L1030.93,460.32 L1026.74,456.12 L1032.60,455.18 Z" stroke="#6b6d6d" stroke-width="4.8" stroke-linejoin="round"/>
    <path d="M1035.30,449.90 L1038.00,455.18 L1043.86,456.12 L1039.67,460.32 L1040.59,466.18 L1035.30,463.50 L1030.01,466.18 L1030.93,460.32 L1026.74,456.12 L1032.60,455.18 Z" fill="#fff" stroke="#fff" stroke-width="2.4" stroke-linejoin="round"/>
    <path d="M1035.30,451.10 L1037.71,455.98 L1043.10,456.77 L1039.20,460.57 L1040.12,465.93 L1035.30,463.40 L1030.48,465.93 L1031.40,460.57 L1027.50,456.77 L1032.89,455.98 Z"/>
    <!-- dots -->
    <circle cx="1035.3" cy="481.6" r="1.75"/><circle cx="1025.3" cy="488.4" r="1.75"/><circle cx="1031.7" cy="487.6" r="1.75"/><circle cx="1038" cy="487.6" r="1.75"/><circle cx="1044.5" cy="488.4" r="1.75"/><circle cx="1029.9" cy="493.3" r="1.75"/><circle cx="1040.1" cy="493.3" r="1.75"/><circle cx="1035.3" cy="497.5" r="1.75"/><circle cx="1028.8" cy="500.2" r="1.75"/><circle cx="1040.9" cy="500.2" r="1.75"/>
    <!-- star outline -->
    <path d="M1035.10,513.60 L1038.04,521.15 L1046.13,521.62 L1039.86,526.75 L1041.92,534.58 L1035.10,530.20 L1028.28,534.58 L1030.34,526.75 L1024.07,521.62 L1032.16,521.15 Z" fill="none" stroke="#6b6d6d" stroke-width="1.6" stroke-linejoin="round"/>
    <!-- hand -->
    <rect x="1024.2" y="551.2" width="14.6" height="14.1" rx="1.6"/>
    <rect x="1032" y="548.2" width="13.9" height="14.1" rx="1.6"/>
    <path d="M1032.6,549.4 H1037.9 Q1039.6,549.4 1039.6,551.2 Q1039.6,553 1037.9,553 H1032.2 Q1030.4,553 1030.4,554.8 Q1030.4,556.6 1032.2,556.6 H1037.9 Q1039.6,556.6 1039.6,558.4 Q1039.6,560.2 1037.9,560.2 H1032.2 Q1030.4,560.2 1030.4,562 Q1030.4,563.8 1032.2,563.8 H1037.6" fill="none" stroke="#eeeeee" stroke-width="1.4"/>
    
    <!-- sketch -->
    <path d="M1027,587.5 L1032.6,582.2 Q1034.4,581 1034.2,582.8 L1027.2,590.6 Q1026,592.6 1028.2,591.6 L1040.8,582.8 Q1043,581.8 1042,583.8 L1028.8,596.4 Q1027.6,598.6 1030,597.4 L1042.8,588.6 Q1044.6,587.6 1043.8,589.6 L1034.4,598.4" fill="none" stroke="#6b6d6d" stroke-width="1.5" stroke-linejoin="round" stroke-linecap="round"/>
    <!-- grid circle -->
    <circle cx="1035.1" cy="622.8" r="10"/>
    <g fill="#fff"><rect x="1029.4" y="612" width="1" height="22"/><rect x="1040.1" y="612" width="1" height="22"/><rect x="1024" y="617.4" width="22" height="1"/><rect x="1024" y="628" width="22" height="1"/></g>
    <!-- skew -->
    <path d="M1028.8,663.2 L1026.9,664.2 V650.8 L1038.4,644.4 V647.6" fill="none" stroke="#6b6d6d" stroke-width="1.5"/>
    <path d="M1031.4,654.6 L1043.4,647.8 V661 L1031.4,667.8 Z" fill="none" stroke="#6b6d6d" stroke-width="1.5"/>
    <path d="M1031.6,654.5 L1038.8,650.4 V657.6 L1031.6,661.6 Z"/>
  </g>
  <!--REP1--><g><path d="M1027.04,384.10 C1027.14,389.51 1037.36,399.51 1042.76,399.50 C1042.66,394.09 1032.44,384.09 1027.04,384.10 Z" fill="#177a88"/><path d="M1036.30,386.90 C1038.57,385.79 1039.75,383.50 1039.17,382.46 C1038.60,380.96 1037.39,380.62 1036.13,381.62 C1035.10,382.20 1034.93,384.77 1036.30,386.90 Z" fill="#177a88"/><path d="M1038.20,389.30 C1040.47,391.13 1043.82,391.56 1044.90,390.69 C1046.35,389.71 1046.32,388.45 1044.82,387.55 C1043.68,386.74 1040.37,387.35 1038.20,389.30 Z" fill="#177a88"/><path d="M1033.70,396.20 C1031.44,397.68 1030.29,400.40 1030.90,401.53 C1031.53,403.08 1032.76,403.35 1033.98,402.21 C1035.01,401.45 1035.12,398.50 1033.70,396.20 Z" fill="#177a88"/><path d="M1031.90,394.30 C1029.77,392.41 1026.58,391.88 1025.51,392.73 C1024.07,393.67 1024.07,394.93 1025.51,395.88 C1026.58,396.72 1029.77,396.19 1031.90,394.30 Z" fill="#177a88"/></g><!--/REP1-->
  <!-- gear -->
  <path d="M1033.16,708.81 L1033.45,706.61 L1036.35,706.61 L1036.64,708.81 L1038.61,709.63 L1040.37,708.28 L1042.42,710.33 L1041.07,712.09 L1041.89,714.06 L1044.09,714.35 L1044.09,717.25 L1041.89,717.54 L1041.07,719.51 L1042.42,721.27 L1040.37,723.32 L1038.61,721.97 L1036.64,722.79 L1036.35,724.99 L1033.45,724.99 L1033.16,722.79 L1031.19,721.97 L1029.43,723.32 L1027.38,721.27 L1028.73,719.51 L1027.91,717.54 L1025.71,717.25 L1025.71,714.35 L1027.91,714.06 L1028.73,712.09 L1027.38,710.33 L1029.43,708.28 L1031.19,709.63 Z M1034.9,712.6 A3.2,3.2 0 1 0 1034.91,712.6 Z" fill="#3fa3da" fill-rule="evenodd"/>
  <!-- refresh -->
  <g fill="none" stroke-width="2.2">
    <path d="M1031,733.2 A7.4,7.4 0 0 0 1030.4,745.2" stroke="#1a6b7e"/>
    <path d="M1037,731.9 A7.4,7.4 0 0 1 1042.3,740.6" stroke="#1fa8d8"/>
    <path d="M1041,744.6 A7.4,7.4 0 0 1 1031,746" stroke="#86cfe8"/>
  </g>
  <path d="M1026.2,743 L1033.6,743.6 L1029.2,748.6 Z" fill="#1a6b7e"/>
  <path d="M1038.8,729.6 L1036.6,735.6 L1033.6,731.6 Z" fill="#1fa8d8"/>
  <path d="M1043.8,742.6 L1038.2,745.6 L1043,748 Z" fill="#86cfe8"/>
</g>


<g id="annot">
  <circle cx="839" cy="383" r="21.2" fill="none" stroke="#e31b2a" stroke-width="2.6"/>
  <path d="M946.1,381.3 H981 V367.9 L1018.2,395.4 L981,422.8 V409.7 H946.1 Z" fill="#ec1c24"/>
</g>
<!-- WINDOW BORDER -->
<rect x="0.5" y="0.5" width="1050" height="753" fill="none" stroke="#1f83d6" stroke-width="1"/>
</svg>
</body></html>
